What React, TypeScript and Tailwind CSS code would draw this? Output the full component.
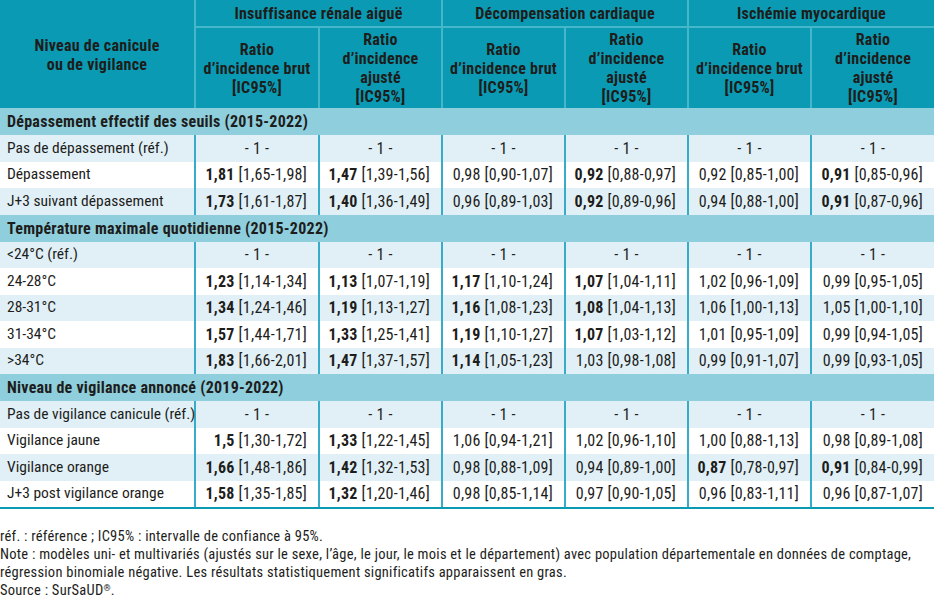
import React from 'react';

type Cell = { b?: string; ci?: string; ref?: boolean };

const FONT = "font-['Roboto_Condensed',Roboto,'DejaVu_Sans_Condensed',sans-serif] font-stretch-condensed";

const REF: Cell[] = Array.from({ length: 6 }, () => ({ ref: true }));

// valeur en gras (significatif) ou valeur simple
const B = (v: string, ci: string): Cell => ({ b: v, ci });
const P = (v: string, ci: string): Cell => ({ b: '', ci: `${v} ${ci}` });

const SECTIONS: { titre: string; lignes: { label: string; cells: Cell[] }[] }[] = [
  {
    titre: 'Dépassement effectif des seuils (2015-2022)',
    lignes: [
      { label: 'Pas de dépassement (réf.)', cells: REF },
      { label: 'Dépassement', cells: [B('1,81', '[1,65-1,98]'), B('1,47', '[1,39-1,56]'), P('0,98', '[0,90-1,07]'), B('0,92', '[0,88-0,97]'), P('0,92', '[0,85-1,00]'), B('0,91', '[0,85-0,96]')] },
      { label: 'J+3 suivant dépassement', cells: [B('1,73', '[1,61-1,87]'), B('1,40', '[1,36-1,49]'), P('0,96', '[0,89-1,03]'), B('0,92', '[0,89-0,96]'), P('0,94', '[0,88-1,00]'), B('0,91', '[0,87-0,96]')] },
    ],
  },
  {
    titre: 'Température maximale quotidienne (2015-2022)',
    lignes: [
      { label: '<24°C (réf.)', cells: REF },
      { label: '24-28°C', cells: [B('1,23', '[1,14-1,34]'), B('1,13', '[1,07-1,19]'), B('1,17', '[1,10-1,24]'), B('1,07', '[1,04-1,11]'), P('1,02', '[0,96-1,09]'), P('0,99', '[0,95-1,05]')] },
      { label: '28-31°C', cells: [B('1,34', '[1,24-1,46]'), B('1,19', '[1,13-1,27]'), B('1,16', '[1,08-1,23]'), B('1,08', '[1,04-1,13]'), P('1,06', '[1,00-1,13]'), P('1,05', '[1,00-1,10]')] },
      { label: '31-34°C', cells: [B('1,57', '[1,44-1,71]'), B('1,33', '[1,25-1,41]'), B('1,19', '[1,10-1,27]'), B('1,07', '[1,03-1,12]'), P('1,01', '[0,95-1,09]'), P('0,99', '[0,94-1,05]')] },
      { label: '>34°C', cells: [B('1,83', '[1,66-2,01]'), B('1,47', '[1,37-1,57]'), B('1,14', '[1,05-1,23]'), P('1,03', '[0,98-1,08]'), P('0,99', '[0,91-1,07]'), P('0,99', '[0,93-1,05]')] },
    ],
  },
  {
    titre: 'Niveau de vigilance annoncé (2019-2022)',
    lignes: [
      { label: 'Pas de vigilance canicule (réf.)', cells: REF },
      { label: 'Vigilance jaune', cells: [B('1,5', '[1,30-1,72]'), B('1,33', '[1,22-1,45]'), P('1,06', '[0,94-1,21]'), P('1,02', '[0,96-1,10]'), P('1,00', '[0,88-1,13]'), P('0,98', '[0,89-1,08]')] },
      { label: 'Vigilance orange', cells: [B('1,66', '[1,48-1,86]'), B('1,42', '[1,32-1,53]'), P('0,98', '[0,88-1,09]'), P('0,94', '[0,89-1,00]'), B('0,87', '[0,78-0,97]'), B('0,91', '[0,84-0,99]')] },
      { label: 'J+3 post vigilance orange', cells: [B('1,58', '[1,35-1,85]'), B('1,32', '[1,20-1,46]'), P('0,98', '[0,85-1,14]'), P('0,97', '[0,90-1,05]'), P('0,96', '[0,83-1,11]'), P('0,96', '[0,87-1,07]')] },
    ],
  },
];

const GROUPES = ['Insuffisance rénale aiguë', 'Décompensation cardiaque', 'Ischémie myocardique'];

function EnteteBrut() {
  return (
    <>
      Ratio<br />d’incidence brut<br />[IC95%]
    </>
  );
}

function EnteteAjuste() {
  return (
    <>
      Ratio<br />d’incidence<br />ajusté<br />[IC95%]
    </>
  );
}

export default function App() {
  return (
    <div className={`w-[934px] h-[601px] bg-white text-[#1d1d1b] ${FONT}`}>
      <table className="w-[934px] table-fixed border-collapse">
        <colgroup>
          <col className="w-[195px]" />
          <col className="w-[124px]" />
          <col className="w-[123px]" />
          <col className="w-[123px]" />
          <col className="w-[123px]" />
          <col className="w-[123px]" />
          <col className="w-[123px]" />
        </colgroup>
        <thead className="bg-[#0b9ab3] text-[16px] tracking-[0.25px] font-bold leading-[19px]">
          <tr className="h-[27px]">
            <th rowSpan={2} className="border-r-2 border-[#45b7cb] text-center align-middle pt-[2px]">
              Niveau de canicule<br />ou de vigilance
            </th>
            {GROUPES.map((g, i) => (
              <th
                key={g}
                colSpan={2}
                className={`border-b-2 border-[#45b7cb] text-center ${i < 2 ? 'border-r-2' : ''}`}
              >
                {g}
              </th>
            ))}
          </tr>
          <tr className="h-[81px]">
            {[0, 1, 2, 3, 4, 5].map((i) => (
              <th
                key={i}
                className={`text-center align-middle border-[#45b7cb] ${i < 5 ? 'border-r-2' : ''}`}
              >
                {i % 2 === 0 ? <EnteteBrut /> : <EnteteAjuste />}
              </th>
            ))}
          </tr>
        </thead>
        <tbody className="text-[16px] tracking-[0.25px] leading-[19px]">
          {SECTIONS.map((s) => (
            <React.Fragment key={s.titre}>
              <tr className="h-[27px] bg-[#8fcedd]">
                <td colSpan={7} className="pl-[7px] font-bold">
                  {s.titre}
                </td>
              </tr>
              {s.lignes.map((l, j) => (
                <tr key={l.label} className={`h-[26.5px] ${j % 2 === 0 ? 'bg-[#e1f0f6]' : 'bg-white'}`}>
                  <td className="pl-[7px] whitespace-nowrap text-[15.5px] tracking-normal">{l.label}</td>
                  {l.cells.map((cell, k) => (
                    <td
                      key={k}
                      className={`border-l-2 border-[#37acc8] whitespace-nowrap ${cell.ref ? 'text-center' : 'text-right pr-[11px]'}`}
                    >
                      {cell.ref ? (
                        '- 1 -'
                      ) : cell.b ? (
                        <>
                          <span className="font-bold">{cell.b}</span> {cell.ci}
                        </>
                      ) : (
                        cell.ci
                      )}
                    </td>
                  ))}
                </tr>
              ))}
            </React.Fragment>
          ))}
        </tbody>
      </table>
      <div className="border-t-2 border-[#0b9ab3]" />
      <div className="pt-[19px] text-[14.5px] tracking-[0.25px] leading-[18px] text-[#1d1d1b]">
        <p>réf. : référence ; IC95% : intervalle de confiance à 95%.</p>
        <p className="whitespace-nowrap">
          Note : modèles uni- et multivariés (ajustés sur le sexe, l’âge, le jour, le mois et le département) avec population départementale en données de comptage,
          <br />
          régression binomiale négative. Les résultats statistiquement significatifs apparaissent en gras.
        </p>
        <p>
          Source : SurSaUD<sup className="text-[9px]">®</sup>.
        </p>
      </div>
    </div>
  );
}
